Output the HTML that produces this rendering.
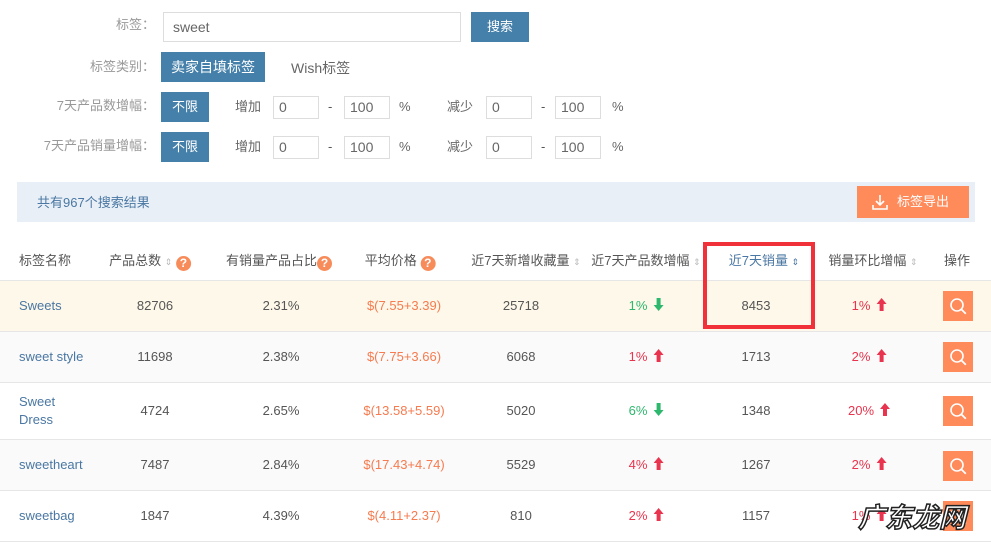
<!DOCTYPE html><html><head><meta charset="utf-8"><style>
*{margin:0;padding:0;box-sizing:border-box}
body{width:991px;height:546px;overflow:hidden;background:#fff;font-family:"Liberation Sans","Noto Sans CJK SC",sans-serif;font-size:13px;color:#555;position:relative}
.a{position:absolute;white-space:nowrap;line-height:18px}
.lbl{color:#999;text-align:right;width:150px}
.btn{background:#4580aa;color:#fff;text-align:center}
.inp{border:1px solid #ddd;background:#fff;padding-left:5px;color:#666;font-size:14px}
.row{position:absolute;left:0;width:991px;border-bottom:1px solid #e6e6e6}
.c{position:absolute;transform:translateX(-50%);white-space:nowrap;line-height:18px}
.red{color:#e8344e}.grn{color:#2db86e}.org{color:#f67b4f}.blu{color:#4a77a3}
.sb{position:absolute;left:943px;width:30px;height:30px;background:#ff8a5a}
.q{display:inline-block;width:15px;height:15px;border-radius:50%;background:#f88b5a;color:#fff;font-size:12px;font-weight:bold;text-align:center;line-height:15px;vertical-align:-2px}
.s{color:#bbb;font-size:9px}
.ar{display:inline-block;width:10px;height:13px;margin-left:6px;vertical-align:-1px}
</style></head><body>
<svg width="0" height="0" style="position:absolute"><defs>
<symbol id="up" viewBox="0 0 10 13"><path d="M5 0L10 6H7V13H3V6H0Z" fill="#e8344e"/></symbol>
<symbol id="dn" viewBox="0 0 10 13"><path d="M5 13L10 7H7V0H3V7H0Z" fill="#2db86e"/></symbol>
</defs></svg>
<div class="a lbl" style="left:5px;top:16px">标签：</div>
<div class="a inp" style="left:163px;top:12px;width:298px;height:30px;line-height:28px;padding-left:9px">sweet</div>
<div class="a btn" style="left:471px;top:12px;width:58px;height:30px;line-height:30px">搜索</div>
<div class="a lbl" style="left:5px;top:58px">标签类别：</div>
<div class="a btn" style="left:161px;top:52px;width:104px;height:30px;line-height:30px;font-size:14px">卖家自填标签</div>
<div class="a" style="left:291px;top:59px;font-size:14px;color:#666">Wish标签</div>
<div class="a lbl" style="left:5px;top:97px">7天产品数增幅：</div>
<div class="a btn" style="left:161px;top:92px;width:48px;height:30px;line-height:30px">不限</div>
<div class="a lbl" style="left:5px;top:137px">7天产品销量增幅：</div>
<div class="a btn" style="left:161px;top:132px;width:48px;height:30px;line-height:30px">不限</div>
<div class="a" style="left:235px;top:98px;color:#666">增加</div>
<div class="a inp" style="left:273px;top:96px;width:46px;height:23px;line-height:21px">0</div>
<div class="a" style="left:328px;top:98px">-</div>
<div class="a inp" style="left:344px;top:96px;width:46px;height:23px;line-height:21px">100</div>
<div class="a" style="left:399px;top:98px;color:#666">%</div>
<div class="a" style="left:447px;top:98px;color:#666">减少</div>
<div class="a inp" style="left:486px;top:96px;width:46px;height:23px;line-height:21px">0</div>
<div class="a" style="left:541px;top:98px">-</div>
<div class="a inp" style="left:555px;top:96px;width:46px;height:23px;line-height:21px">100</div>
<div class="a" style="left:612px;top:98px;color:#666">%</div>
<div class="a" style="left:235px;top:138px;color:#666">增加</div>
<div class="a inp" style="left:273px;top:136px;width:46px;height:23px;line-height:21px">0</div>
<div class="a" style="left:328px;top:138px">-</div>
<div class="a inp" style="left:344px;top:136px;width:46px;height:23px;line-height:21px">100</div>
<div class="a" style="left:399px;top:138px;color:#666">%</div>
<div class="a" style="left:447px;top:138px;color:#666">减少</div>
<div class="a inp" style="left:486px;top:136px;width:46px;height:23px;line-height:21px">0</div>
<div class="a" style="left:541px;top:138px">-</div>
<div class="a inp" style="left:555px;top:136px;width:46px;height:23px;line-height:21px">100</div>
<div class="a" style="left:612px;top:138px;color:#666">%</div>

<div class="a" style="left:17px;top:182px;width:958px;height:40px;background:#e8eff6"></div>
<div class="a blu" style="left:37px;top:194px">共有967个搜索结果</div>
<div class="a" style="left:857px;top:186px;width:112px;height:32px;background:#ff8a5a;color:#fff;line-height:32px;padding-left:40px">标签导出
<svg style="position:absolute;left:14px;top:7px" width="18" height="18" viewBox="0 0 18 18" fill="none" stroke="#fff" stroke-width="1.6"><path d="M9 2v10M5 8l4 4 4-4M2 12v4h14v-4"/></svg></div>

<div class="row" style="top:242px;height:39px"></div>
<div class="a" style="left:19px;top:252px">标签名称</div>
<div class="c" style="left:150px;top:252px">产品总数 <span class="s">⇕</span> <span class="q">?</span></div>
<div class="c" style="left:279px;top:252px">有销量产品占比<span class="q">?</span></div>
<div class="c" style="left:400px;top:252px">平均价格 <span class="q">?</span></div>
<div class="c" style="left:526px;top:252px">近7天新增收藏量 <span class="s">⇕</span></div>
<div class="c" style="left:646px;top:252px">近7天产品数增幅 <span class="s">⇕</span></div>
<div class="c blu" style="left:764px;top:252px">近7天销量 <span class="s" style="color:#4a77a3">⇕</span></div>
<div class="c" style="left:873px;top:252px">销量环比增幅 <span class="s">⇕</span></div>
<div class="c" style="left:957px;top:252px">操作</div>

<div class="row" style="top:281px;height:51px;background:#fdf8e9"></div>
<div class="row" style="top:332px;height:51px;background:#fafafa"></div>
<div class="row" style="top:383px;height:57px;background:#fff"></div>
<div class="row" style="top:440px;height:51px;background:#fafafa"></div>
<div class="row" style="top:491px;height:51px;background:#fff"></div>

<div class="a blu" style="left:19px;top:297px">Sweets</div>
<div class="a blu" style="left:19px;top:348px">sweet style</div>
<div class="a blu" style="left:19px;top:393px;line-height:18px">Sweet<br>Dress</div>
<div class="a blu" style="left:19px;top:456px">sweetheart</div>
<div class="a blu" style="left:19px;top:507px">sweetbag</div>

<div class="c" style="left:155px;top:297px">82706</div><div class="c" style="left:281px;top:297px">2.31%</div><div class="c org" style="left:404px;top:297px">$(7.55+3.39)</div><div class="c" style="left:521px;top:297px">25718</div><div class="c grn" style="left:646px;top:297px">1%<svg class="ar"><use href="#dn"/></svg></div><div class="c" style="left:756px;top:297px">8453</div><div class="c red" style="left:869px;top:297px">1%<svg class="ar"><use href="#up"/></svg></div>
<div class="c" style="left:155px;top:348px">11698</div><div class="c" style="left:281px;top:348px">2.38%</div><div class="c org" style="left:404px;top:348px">$(7.75+3.66)</div><div class="c" style="left:521px;top:348px">6068</div><div class="c red" style="left:646px;top:348px">1%<svg class="ar"><use href="#up"/></svg></div><div class="c" style="left:756px;top:348px">1713</div><div class="c red" style="left:869px;top:348px">2%<svg class="ar"><use href="#up"/></svg></div>
<div class="c" style="left:155px;top:402px">4724</div><div class="c" style="left:281px;top:402px">2.65%</div><div class="c org" style="left:404px;top:402px">$(13.58+5.59)</div><div class="c" style="left:521px;top:402px">5020</div><div class="c grn" style="left:646px;top:402px">6%<svg class="ar"><use href="#dn"/></svg></div><div class="c" style="left:756px;top:402px">1348</div><div class="c red" style="left:869px;top:402px">20%<svg class="ar"><use href="#up"/></svg></div>
<div class="c" style="left:155px;top:456px">7487</div><div class="c" style="left:281px;top:456px">2.84%</div><div class="c org" style="left:404px;top:456px">$(17.43+4.74)</div><div class="c" style="left:521px;top:456px">5529</div><div class="c red" style="left:646px;top:456px">4%<svg class="ar"><use href="#up"/></svg></div><div class="c" style="left:756px;top:456px">1267</div><div class="c red" style="left:869px;top:456px">2%<svg class="ar"><use href="#up"/></svg></div>
<div class="c" style="left:155px;top:507px">1847</div><div class="c" style="left:281px;top:507px">4.39%</div><div class="c org" style="left:404px;top:507px">$(4.11+2.37)</div><div class="c" style="left:521px;top:507px">810</div><div class="c red" style="left:646px;top:507px">2%<svg class="ar"><use href="#up"/></svg></div><div class="c" style="left:756px;top:507px">1157</div><div class="c red" style="left:869px;top:507px">1%<svg class="ar"><use href="#up"/></svg></div>

<svg class="sb" style="top:291px" viewBox="0 0 30 30"><circle cx="14" cy="14" r="6" fill="none" stroke="#fff" stroke-width="1.6"/><path d="M18.3 18.3l4.5 4.5" stroke="#fff" stroke-width="1.8"/></svg>
<svg class="sb" style="top:342px" viewBox="0 0 30 30"><circle cx="14" cy="14" r="6" fill="none" stroke="#fff" stroke-width="1.6"/><path d="M18.3 18.3l4.5 4.5" stroke="#fff" stroke-width="1.8"/></svg>
<svg class="sb" style="top:396px" viewBox="0 0 30 30"><circle cx="14" cy="14" r="6" fill="none" stroke="#fff" stroke-width="1.6"/><path d="M18.3 18.3l4.5 4.5" stroke="#fff" stroke-width="1.8"/></svg>
<svg class="sb" style="top:451px" viewBox="0 0 30 30"><circle cx="14" cy="14" r="6" fill="none" stroke="#fff" stroke-width="1.6"/><path d="M18.3 18.3l4.5 4.5" stroke="#fff" stroke-width="1.8"/></svg>
<svg class="sb" style="top:501px" viewBox="0 0 30 30"><circle cx="14" cy="14" r="6" fill="none" stroke="#fff" stroke-width="1.6"/><path d="M18.3 18.3l4.5 4.5" stroke="#fff" stroke-width="1.8"/></svg>

<div class="a" style="left:703px;top:242px;width:112px;height:87px;border:4px solid #f0313a"></div>
<div class="a" style="left:858px;top:502px;font-size:27px;line-height:32px;font-weight:bold;color:#fff;-webkit-text-stroke:1.5px #222;font-style:italic">广东龙网</div>
</body></html>
